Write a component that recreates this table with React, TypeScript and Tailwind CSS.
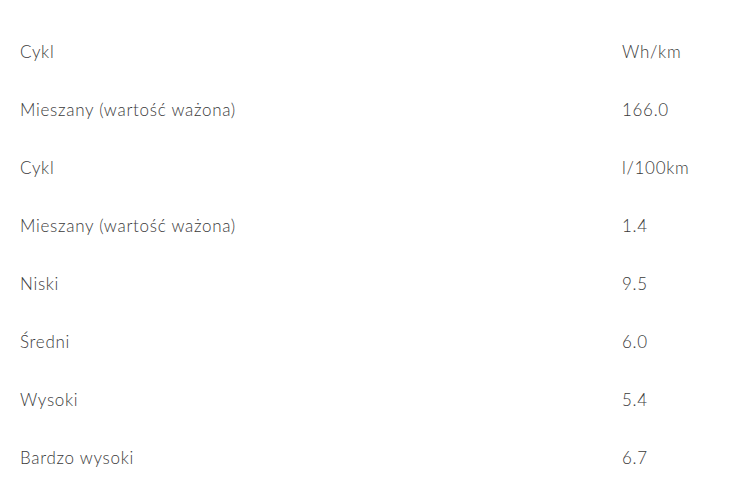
import React from 'react';

const rows: [string, string][] = [
  ['Cykl', 'Wh/km'],
  ['Mieszany (wartość ważona)', '166.0'],
  ['Cykl', 'l/100km'],
  ['Mieszany (wartość ważona)', '1.4'],
  ['Niski', '9.5'],
  ['Średni', '6.0'],
  ['Wysoki', '5.4'],
  ['Bardzo wysoki', '6.7'],
];

const App: React.FC = () => {
  return (
    <div className="w-[750px] h-[500px] bg-white pt-[23px] font-['Lato',sans-serif] font-light text-[17px] tracking-[0.7px] text-[#3a3a3a]">
      {rows.map(([label, value], i) => (
        <div key={i} className="flex items-center h-[58px] px-5">
          <div className="w-[602px]">{label}</div>
          <div>{value}</div>
        </div>
      ))}
    </div>
  );
};

export default App;
